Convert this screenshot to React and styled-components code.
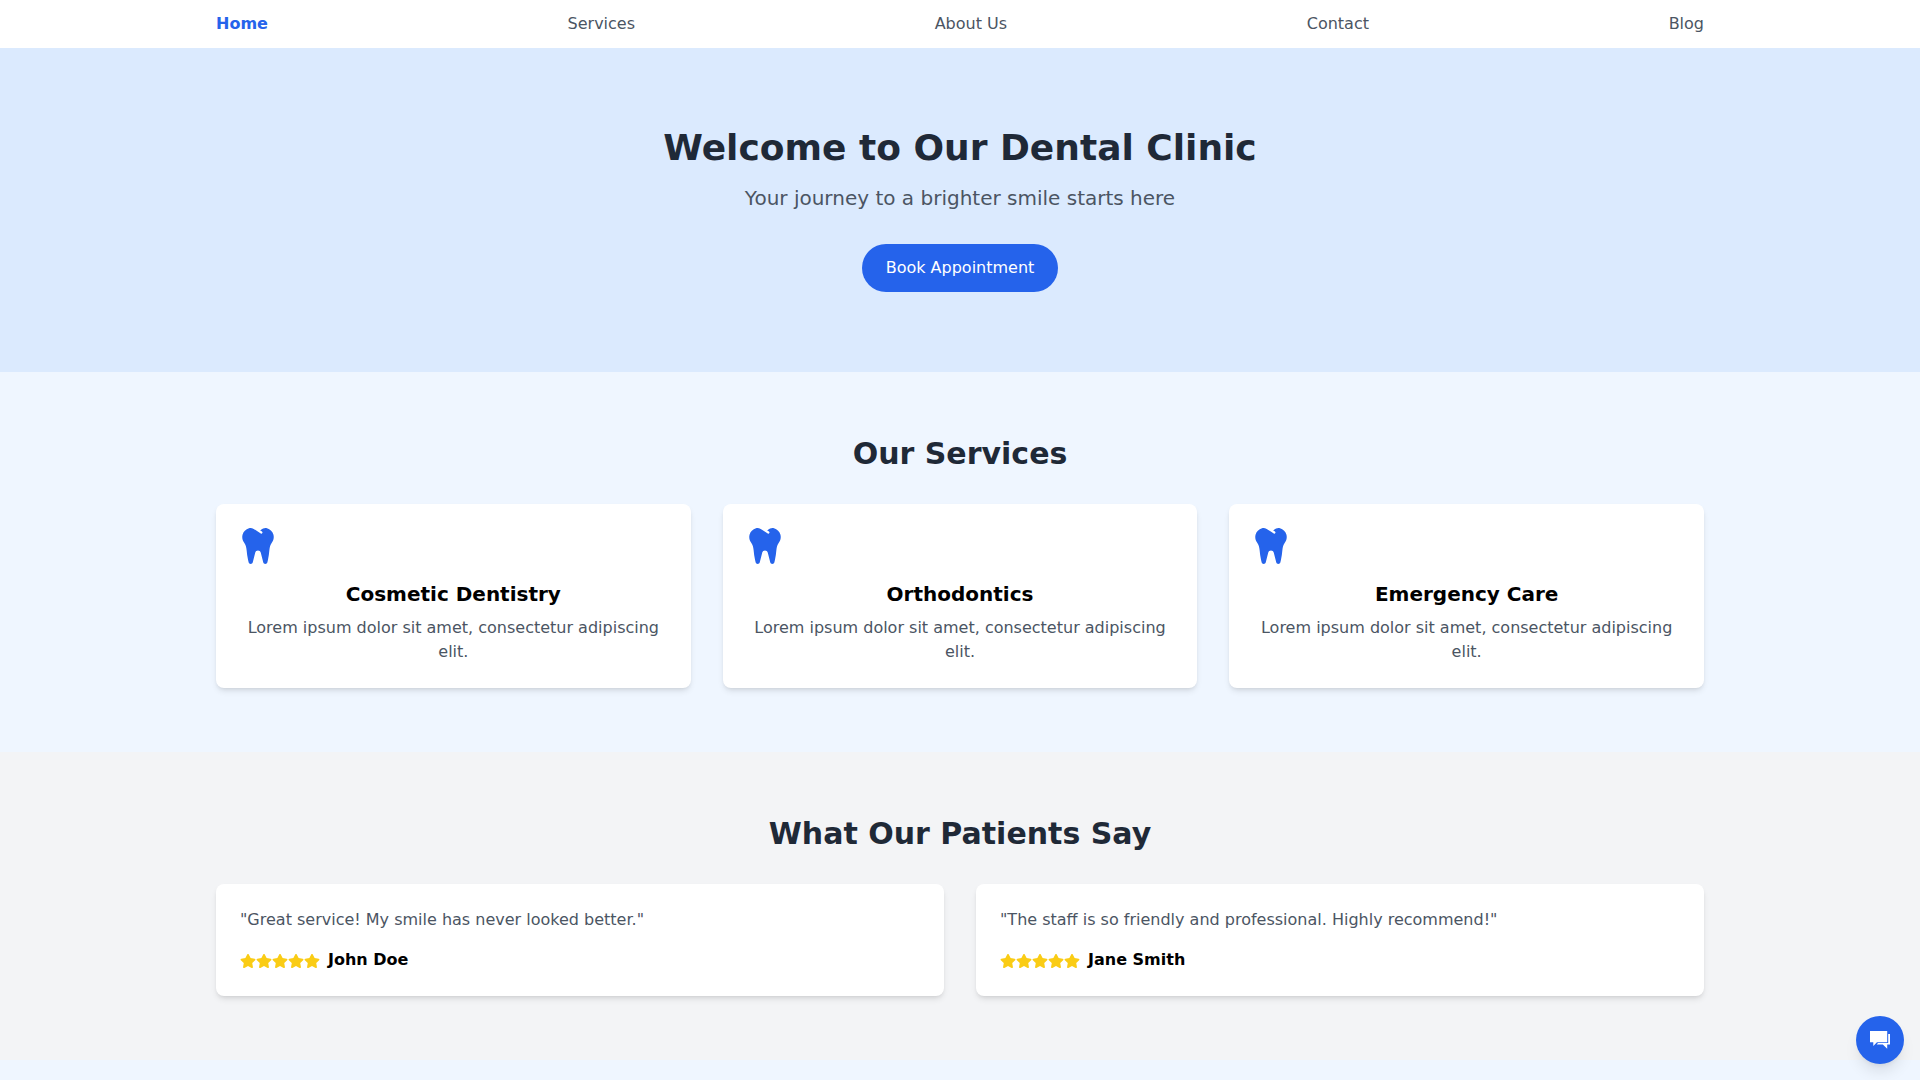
import React from "react";
import styled, { createGlobalStyle } from "styled-components";
import { FaTooth, FaStar } from "react-icons/fa";

const Global = createGlobalStyle`
  *, *::before, *::after { box-sizing: border-box; }
  body {
    margin: 0;
    font-family: "DejaVu Sans", sans-serif;
    font-size: 16px;
    line-height: 24px;
    color: #000;
    background: #eff6ff;
  }
  h1, h2, h3, p, ul { margin: 0; padding: 0; }
`;

const Page = styled.div`
  min-height: 100vh;
  background: #eff6ff;
`;

const Container = styled.div`
  max-width: 1536px;
  margin: 0 auto;
  padding: 0 24px;
`;

const Header = styled.header`
  background: #fff;
`;

const NavList = styled.ul`
  display: flex;
  justify-content: space-between;
  list-style: none;
`;

const NavItem = styled.li`
  padding: 12px 0;
`;

const NavLink = styled.a`
  color: ${(p) => (p.$active ? "#2563eb" : "#4b5563")};
  font-weight: ${(p) => (p.$active ? 700 : 400)};
  text-decoration: none;
`;

const Hero = styled.section`
  padding: 80px 0;
  background: #dbeafe;
  text-align: center;
`;

const HeroTitle = styled.h1`
  font-size: 36px;
  line-height: 40px;
  font-weight: 700;
  color: #1f2937;
  margin-bottom: 16px;
`;

const HeroText = styled.p`
  font-size: 20px;
  line-height: 28px;
  color: #4b5563;
  margin-bottom: 32px;
`;

const BookButton = styled.button`
  border: 0;
  border-radius: 9999px;
  padding: 12px 24px;
  background: #2563eb;
  color: #fff;
  font: inherit;
  cursor: pointer;
`;

const Section = styled.section`
  padding: 64px 0;
  background: ${(p) => (p.$muted ? "#f3f4f6" : "transparent")};
`;

const SectionTitle = styled.h2`
  font-size: 30px;
  line-height: 36px;
  font-weight: 700;
  color: #1f2937;
  text-align: center;
  margin-bottom: 32px;
`;

const Grid = styled.div`
  display: grid;
  grid-template-columns: repeat(${(p) => p.$columns}, minmax(0, 1fr));
  gap: 32px;
`;

const Card = styled.article`
  padding: 24px;
  border-radius: 8px;
  background: #fff;
  box-shadow: 0 4px 6px -1px rgba(0, 0, 0, 0.1), 0 2px 4px -2px rgba(0, 0, 0, 0.1);
  text-align: ${(p) => (p.$centered ? "center" : "left")};
`;

const ToothIcon = styled(FaTooth)`
  display: block;
  width: 36px;
  height: 36px;
  margin-bottom: 16px;
  color: #2563eb;
`;

const CardTitle = styled.h3`
  font-size: 20px;
  line-height: 28px;
  font-weight: 700;
  margin-bottom: 8px;
`;

const CardText = styled.p`
  color: #4b5563;
`;

const Quote = styled(CardText)`
  margin-bottom: 16px;
`;

const Review = styled.div`
  display: flex;
  align-items: center;
`;

const Stars = styled.span`
  display: flex;
  padding-top: 2px;
  margin-right: 8px;
  color: #facc15;
`;

const Author = styled.span`
  font-weight: 700;
`;

const ChatButton = styled.button`
  position: fixed;
  right: 16px;
  bottom: 16px;
  display: flex;
  padding: 12px;
  border: 0;
  border-radius: 9999px;
  background: #2563eb;
  color: #fff;
  cursor: pointer;
  box-shadow: 0 10px 15px -3px rgba(0, 0, 0, 0.1), 0 4px 6px -4px rgba(0, 0, 0, 0.1);
`;

function ChatIcon() {
  return (
    <svg width="24" height="24" viewBox="0 0 24 24" fill="currentColor" aria-hidden="true">
      <path d="M2 3h17.2v11.2H9L5.3 18v-3.8H2z" />
      <path d="M20.2 6H22v10.4h-2.8v4.3l-4.4-4.3H8.7L10 15h10.2z" />
    </svg>
  );
}

const links = ["Home", "Services", "About Us", "Contact", "Blog"];
const services = ["Cosmetic Dentistry", "Orthodontics", "Emergency Care"];
const reviews = [
  { name: "John Doe", text: '"Great service! My smile has never looked better."' },
  { name: "Jane Smith", text: '"The staff is so friendly and professional. Highly recommend!"' },
];

export default function App() {
  return (
    <Page>
      <Global />
      <Header>
        <Container as="nav">
          <NavList>
            {links.map((label, i) => (
              <NavItem key={label}>
                <NavLink href="#" $active={i === 0}>{label}</NavLink>
              </NavItem>
            ))}
          </NavList>
        </Container>
      </Header>
      <main>
        <Hero>
          <Container>
            <HeroTitle>Welcome to Our Dental Clinic</HeroTitle>
            <HeroText>Your journey to a brighter smile starts here</HeroText>
            <BookButton type="button">Book Appointment</BookButton>
          </Container>
        </Hero>
        <Section>
          <Container>
            <SectionTitle>Our Services</SectionTitle>
            <Grid $columns={3}>
              {services.map((name) => (
                <Card key={name} $centered>
                  <ToothIcon />
                  <CardTitle>{name}</CardTitle>
                  <CardText>Lorem ipsum dolor sit amet, consectetur adipiscing elit.</CardText>
                </Card>
              ))}
            </Grid>
          </Container>
        </Section>
        <Section $muted>
          <Container>
            <SectionTitle>What Our Patients Say</SectionTitle>
            <Grid $columns={2}>
              {reviews.map((review) => (
                <Card key={review.name}>
                  <Quote>{review.text}</Quote>
                  <Review>
                    <Stars role="img" aria-label="5 out of 5 stars">
                      {[1, 2, 3, 4, 5].map((n) => <FaStar key={n} />)}
                    </Stars>
                    <Author>{review.name}</Author>
                  </Review>
                </Card>
              ))}
            </Grid>
          </Container>
        </Section>
      </main>
      <ChatButton type="button" aria-label="Open chat">
        <ChatIcon />
      </ChatButton>
    </Page>
  );
}
